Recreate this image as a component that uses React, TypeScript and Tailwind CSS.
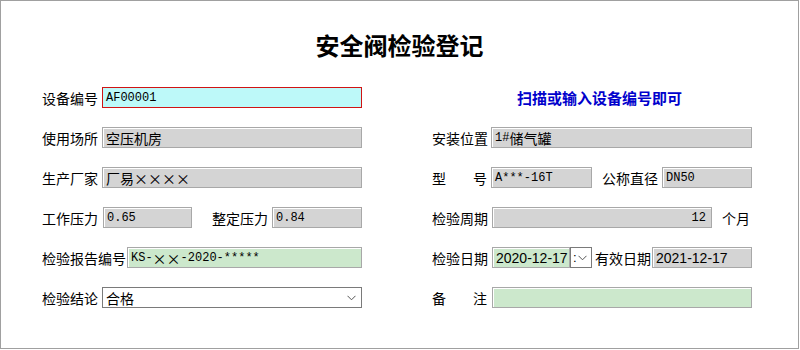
import React from "react";

const CJK = "font-['Noto_Sans_CJK_SC',sans-serif]";
const MONO = "font-['Liberation_Mono','Noto_Sans_CJK_SC',monospace] text-[12px]";

const base =
  "h-[21px] flex items-center pl-[3px] overflow-hidden whitespace-nowrap text-[14px] text-black leading-none";
const gray = `${base} bg-[#d4d4d4] border border-[#a8a8a8] shadow-[inset_1px_1px_0_#ffffff]`;
const green = `${base} bg-[#cce8cc] border border-[#a8a8a8] shadow-[inset_1px_1px_0_#ffffff]`;

function M({ children }: { children: React.ReactNode }) {
  return <span className={MONO}>{children}</span>;
}

function Chevron() {
  return (
    <svg width="9" height="6" viewBox="0 0 9 6" className="shrink-0">
      <polyline points="0.5,0.8 4.5,4.8 8.5,0.8" fill="none" stroke="#555" strokeWidth="1" />
    </svg>
  );
}

function Label({ w, children }: { w: string; children: React.ReactNode }) {
  return (
    <div className={`${w} shrink-0 text-[14px] leading-none text-black whitespace-nowrap`}>
      {children}
    </div>
  );
}

export default function App() {
  return (
    <div className={`w-[799px] h-[349px] bg-white border border-[#a0a0a0] ${CJK}`}>
      <div className="pt-[28px] h-[86px] text-center text-[24px] font-bold leading-[32px] text-black">
        安全阀检验登记
      </div>
      <div className="flex pl-[41px] gap-[70px]">
        {/* Left column */}
        <div className="w-[320px] flex flex-col gap-[19px]">
          <div className="flex items-center">
            <Label w="w-[60px]">设备编号</Label>
            <div className={`${base} w-[260px] bg-[#bdf9f9] border border-[#d01414]`}>
              <M>AF00001</M>
            </div>
          </div>
          <div className="flex items-center">
            <Label w="w-[60px]">使用场所</Label>
            <div className={`${gray} w-[260px]`}>空压机房</div>
          </div>
          <div className="flex items-center">
            <Label w="w-[60px]">生产厂家</Label>
            <div className={`${gray} w-[260px]`}>厂易××××</div>
          </div>
          <div className="flex items-center">
            <Label w="w-[61px]">工作压力</Label>
            <div className={`${gray} w-[89px]`}>
              <M>0.65</M>
            </div>
            <div className="w-[20px]" />
            <Label w="w-[60px]">整定压力</Label>
            <div className={`${gray} w-[90px]`}>
              <M>0.84</M>
            </div>
          </div>
          <div className="flex items-center">
            <Label w="w-[85px]">检验报告编号</Label>
            <div className={`${green} w-[235px]`}>
              <M>KS-</M>××<M>-2020-*****</M>
            </div>
          </div>
          <div className="flex items-center">
            <Label w="w-[60px]">检验结论</Label>
            <div className={`${base} w-[260px] bg-white border border-[#7a7a7a] justify-between pr-[5px]`}>
              <span>合格</span>
              <Chevron />
            </div>
          </div>
        </div>

        {/* Right column */}
        <div className="w-[320px] flex flex-col gap-[19px]">
          <div className="flex items-center h-[21px]">
            <div className="pl-[85px] text-[15px] font-bold leading-none text-[#0000cc] whitespace-nowrap">
              扫描或输入设备编号即可
            </div>
          </div>
          <div className="flex items-center">
            <Label w="w-[59px]">安装位置</Label>
            <div className={`${gray} w-[261px]`}>
              <M>1#</M>储气罐
            </div>
          </div>
          <div className="flex items-center">
            <div className="w-[59px] shrink-0">
              <div className="w-[55px] flex justify-between text-[14px] leading-none">
                <span>型</span>
                <span>号</span>
              </div>
            </div>
            <div className={`${gray} w-[101px]`}>
              <M>A***-16T</M>
            </div>
            <div className="w-[10px]" />
            <Label w="w-[60px]">公称直径</Label>
            <div className={`${gray} w-[90px]`}>
              <M>DN50</M>
            </div>
          </div>
          <div className="flex items-center">
            <Label w="w-[60px]">检验周期</Label>
            <div className={`${gray} w-[220px] justify-end pr-[5px]`}>
              <M>12</M>
            </div>
            <div className="pl-[10px] text-[14px] leading-none whitespace-nowrap">个月</div>
          </div>
          <div className="flex items-center">
            <Label w="w-[60px]">检验日期</Label>
            <div className={`${green} w-[78px] font-['Liberation_Sans',sans-serif] text-[13.5px]`}>
              2020-12-17
            </div>
            <div className="h-[21px] w-[22px] bg-white border border-[#7a7a7a] flex items-center pl-[2px] gap-[1px] text-[13px] leading-none">
              <span className="font-['Liberation_Sans',sans-serif]">:</span>
              <Chevron />
            </div>
            <div className="w-[3px]" />
            <Label w="w-[57px]">有效日期</Label>
            <div className={`${gray} w-[100px] font-['Liberation_Sans',sans-serif] text-[13.5px]`}>
              2021-12-17
            </div>
          </div>
          <div className="flex items-center">
            <div className="w-[60px] shrink-0">
              <div className="w-[55px] flex justify-between text-[14px] leading-none">
                <span>备</span>
                <span>注</span>
              </div>
            </div>
            <div className={`${green} w-[260px]`} />
          </div>
        </div>
      </div>
    </div>
  );
}
